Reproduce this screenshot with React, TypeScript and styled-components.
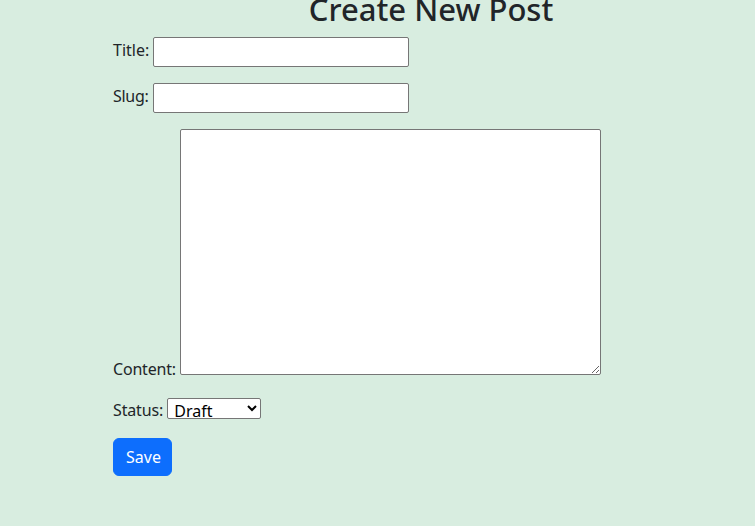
import React from "react";
import styled, { createGlobalStyle } from "styled-components";

const Global = createGlobalStyle`
  html, body { margin: 0; padding: 0; }
  body {
    background: #d8ede0;
    color: #212529;
    font-family: "Noto Sans", "Open Sans", sans-serif;
    font-size: 16px;
    line-height: 1.5;
    overflow: hidden;
  }
`;

const Page = styled.div`
  width: 755px;
  height: 526px;
  box-sizing: border-box;
  padding-left: 113px;
  padding-right: 6px;
`;

const Heading = styled.h1`
  margin: -9px 0 9px;
  font-size: 31px;
  font-weight: 500;
  line-height: 1.2;
  text-align: center;
  color: #212529;
`;

const Row = styled.div`
  margin-bottom: 16px;
`;

const Label = styled.label<{ $spacing?: string }>`
  color: #212529;
  letter-spacing: ${(p) => p.$spacing ?? "0"};
`;

const TextInput = styled.input`
  box-sizing: border-box;
  width: 256px;
  height: 30px;
  margin: 0;
  padding: 1px 2px;
  border: 1px solid #767676;
  border-radius: 2px;
  background: #fff;
  font: inherit;
  vertical-align: middle;
`;

const Area = styled.textarea`
  box-sizing: border-box;
  width: 421px;
  height: 246px;
  margin: 0;
  padding: 2px;
  border: 1px solid #767676;
  border-radius: 2px;
  background: #fff;
  font: inherit;
  vertical-align: baseline;
`;

const Select = styled.select`
  box-sizing: border-box;
  width: 94px;
  height: 21px;
  margin: 0;
  padding: 0 0 0 2px;
  border: 1px solid #767676;
  border-radius: 2px;
  background: #fff;
  color: #000;
  font-family: inherit;
  font-size: 16px;
  line-height: 1;
  position: relative;
  top: 1px;
`;

const Button = styled.button`
  box-sizing: border-box;
  width: 59px;
  height: 38px;
  padding: 6px 12px;
  border: 1px solid #0d6efd;
  border-radius: 6px;
  background: #0d6efd;
  color: #fff;
  font: inherit;
  cursor: pointer;
`;

export default function App() {
  return (
    <>
      <Global />
      <Page>
        <Heading>Create New Post</Heading>
        <form onSubmit={(e) => e.preventDefault()}>
          <Row>
            <Label htmlFor="title">Title:</Label> <TextInput id="title" type="text" />
          </Row>
          <Row>
            <Label htmlFor="slug" $spacing="-0.3px">Slug:</Label> <TextInput id="slug" type="text" />
          </Row>
          <Row>
            <Label htmlFor="content" $spacing="-0.2px">Content:</Label> <Area id="content" />
          </Row>
          <Row>
            <Label htmlFor="status" $spacing="-0.15px">Status:</Label>{" "}
            <Select id="status" defaultValue="draft">
              <option value="draft">Draft</option>
              <option value="published">Published</option>
            </Select>
          </Row>
          <Button type="submit">Save</Button>
        </form>
      </Page>
    </>
  );
}
